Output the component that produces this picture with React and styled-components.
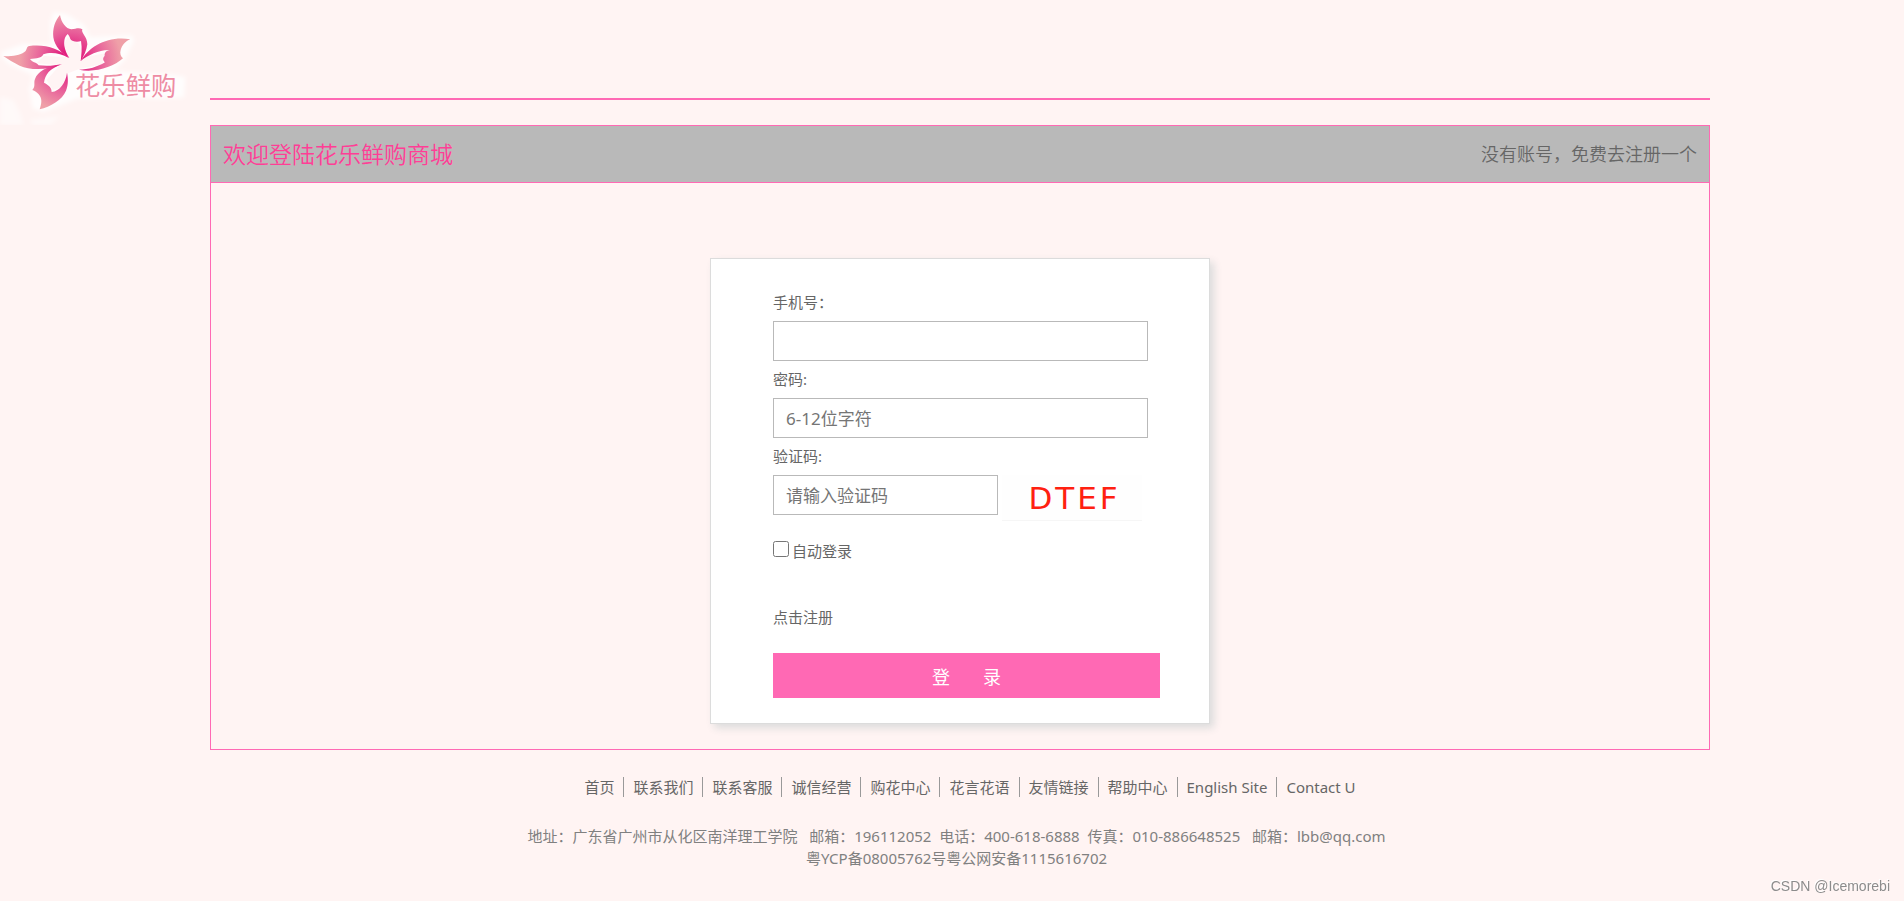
import { useState } from 'react';
import styled, { createGlobalStyle } from 'styled-components';

const GlobalStyle = createGlobalStyle`
	:root {
		--color-bg: #fff4f3;
		--color-pink: #ff69b4;
		--color-title: #ff3e96;
		--color-bar: #b9b9b9;
		--color-text-main: #666;
		--color-text-sec: #808080;
	}

	* {
		box-sizing: border-box;
		margin: 0;
		padding: 0;
	}

	body {
		background-color: var(--color-bg);
		color: var(--color-text-main);
		font-family: 'Noto Sans', 'Noto Sans CJK SC', sans-serif;
		font-size: 15px;
		line-height: 22px;
	}

	a {
		color: inherit;
		text-decoration: none;
	}

	input,
	button {
		font-family: inherit;
	}
`;

const Header = styled.header`
	display: flex;
	height: 125px;
`;

const LogoSide = styled.div`
	flex: 1 1 16px;
	min-width: 188px;
`;

const HeaderLine = styled.div`
	flex: 0 1 1500px;
	height: 100px;
	border-bottom: 2px solid var(--color-pink);
`;

const HeaderEnd = styled.div`
	flex: 1 1 0;
`;

const LogoSvg = styled.svg`
	display: block;
	width: 188px;
	height: 125px;
`;

const LogoText = styled.text`
	font-family: 'Liberation Serif', 'Noto Sans CJK SC', serif;
	font-size: 76px;
	fill: #ee8ca4;
`;

const Main = styled.main`
	padding-left: 16px;
`;

const Panel = styled.section`
	max-width: 1500px;
	margin: 0 auto;
	padding-bottom: 25px;
	border: 1px solid var(--color-pink);
`;

const PanelBar = styled.div`
	display: flex;
	align-items: center;
	justify-content: space-between;
	height: 57px;
	padding: 0 12px;
	border-bottom: 1px solid var(--color-pink);
	background-color: var(--color-bar);
`;

const Title = styled.h1`
	color: var(--color-title);
	font-size: 23px;
	font-weight: 350;
`;

const RegisterLink = styled.a`
	font-size: 18px;
	font-weight: 350;
`;

const Form = styled.form`
	display: flex;
	flex-direction: column;
	width: 500px;
	max-width: 100%;
	margin: 75px auto 0;
	padding: 25px 49px 25px 62px;
	border: 1px solid #dcdcdc;
	background-color: #fff;
	box-shadow: 4px 4px 8px #dcdcdc;
`;

const Field = styled.div`
	display: flex;
	flex-direction: column;
	margin-right: 12px;
`;

const Label = styled.label`
	padding: 7px 0 8px;
`;

const Input = styled.input`
	width: ${props => (props.$short ? '225px' : '100%')};
	height: 40px;
	padding: 0 12px;
	border: 1px solid var(--color-bar);
	font-size: 17px;
	color: var(--color-text-main);

	&::placeholder {
		color: #757575;
	}

	&:focus {
		outline: 1px solid var(--color-pink);
	}
`;

const CodeRow = styled.div`
	display: flex;
	align-items: flex-start;
	gap: 4px;
`;

const Code = styled.div`
	display: flex;
	justify-content: center;
	gap: 3px;
	width: 140px;
	height: 46px;
	padding-left: 2px;
	border-bottom: 1px solid #f6f6f6;
	background-color: #fefefe;
	font-family: 'DejaVu Sans', sans-serif;
	font-size: 31px;
	line-height: 47px;
	color: #ff2010;
`;

const Remember = styled.div`
	display: flex;
	align-items: center;
	gap: 3px;
	margin-top: 19px;
`;

const Checkbox = styled.input`
	width: 16px;
	height: 16px;
	margin-bottom: 5px;
`;

const SignUp = styled.a`
	align-self: flex-start;
	margin: 44px 0 25px;
`;

const Submit = styled.button`
	height: 45px;
	border: none;
	background-color: var(--color-pink);
	color: #fff;
	font-size: 18px;
	white-space: pre;
	cursor: pointer;

	&:hover {
		opacity: 0.9;
	}
`;

const Footer = styled.footer`
	padding: 27px 0 30px;
`;

const FooterNav = styled.nav`
	display: flex;
	justify-content: center;
	padding-left: 36px;
`;

const FooterLink = styled.a`
	padding: 0 9px;
	border-left: 1px solid #999;
	line-height: 20px;

	&:first-child {
		border-left: none;
	}
`;

const Address = styled.address`
	margin-top: 28px;
	padding-left: 9px;
	font-style: normal;
	text-align: center;
	color: var(--color-text-sec);
	white-space: pre-wrap;
`;

const Watermark = styled.span`
	position: fixed;
	right: 14px;
	bottom: 4px;
	font-family: 'Liberation Sans', Arial, sans-serif;
	font-size: 14px;
	color: #8c8c8c;
	text-shadow: -1px -1px 0 #fff;
`;

const footerLinks = [
	'首页',
	'联系我们',
	'联系客服',
	'诚信经营',
	'购花中心',
	'花言花语',
	'友情链接',
	'帮助中心',
	'English Site',
	'Contact U',
];

function Logo() {
	return (
		<LogoSvg viewBox="0 0 564 375" role="img" aria-label="花乐鲜购">
			<defs>
				<radialGradient
					id="petal"
					gradientUnits="userSpaceOnUse"
					cx="212"
					cy="185"
					r="180"
				>
					<stop offset="0.2" stopColor="#e2207f" />
					<stop offset="0.5" stopColor="#e8609a" />
					<stop offset="0.85" stopColor="#efa0a8" />
				</radialGradient>
				<filter id="soft" x="-10%" y="-10%" width="120%" height="120%">
					<feGaussianBlur stdDeviation="7" />
				</filter>
			</defs>

			{/* white glow under the flower and the name */}
			<g fill="#fff" filter="url(#soft)">
				<path
					opacity="0.85"
					d="M160 36L200 42L256 78L270 112L396 106L402 122L372 183L340 214L520 224L556 232L552 292L470 296L380 292L230 296L130 336L98 325L88 268L98 225L30 194L4 172L4 156L70 132L154 134L150 70Z"
				/>
				<path
					opacity="0.5"
					d="M0 290L40 300L60 340L70 375L0 375ZM90 360L180 348L150 375L100 375Z"
				/>
			</g>
			<path
				fill="#fff4f4"
				d="M203 112L238 132L248 172L318 160L308 192L240 206L198 222L190 262L158 270L140 240L180 196L110 190L132 168L204 172L192 134Z"
			/>

			<g fill="url(#petal)">
				<path d="M180 45C184 68 198 86 214 88C228 86 238 82 247 88C242 100 262 108 262 133C260 152 251 168 242 184C244 164 247 146 243 123C232 128 216 125 211 117C209 109 205 104 203 102C193 111 192 124 193 137C195 151 201 162 208 174C186 162 164 140 160 112C157 86 165 62 180 45Z" />
				<path d="M391 118C376 124 366 136 362 150C359 160 362 170 369 175C340 202 284 219 237 209C266 209 292 201 315 187C307 180 309 172 314 168C313 158 318 152 330 150C300 148 266 164 242 183C267 139 326 106 391 118Z" />
				<path d="M10 168C42 171 65 164 76 154C82 147 79 140 88 138C134 132 178 145 206 174C180 158 150 156 130 163C126 174 110 176 90 177C98 188 112 188 116 196C142 199 164 197 186 192C150 209 94 213 59 197C40 188 25 178 10 168Z" />
				<path d="M180 195C139 199 113 215 105 237C100 249 108 258 97 270C112 276 124 287 124 303C124 312 121 321 119 328C151 321 187 299 198 272C206 251 204 235 201 218C197 248 180 273 155 276C155 264 149 257 132 248C135 223 150 206 180 195Z" />
			</g>
			<LogoText x="225" y="286">
				花乐鲜购
			</LogoText>
		</LogoSvg>
	);
}

function App() {
	const [phone, setPhone] = useState('');
	const [password, setPassword] = useState('');
	const [code, setCode] = useState('');

	return (
		<>
			<GlobalStyle />
			<Header>
				<LogoSide>
					<Logo />
				</LogoSide>
				<HeaderLine />
				<HeaderEnd />
			</Header>

			<Main>
				<Panel>
					<PanelBar>
						<Title>欢迎登陆花乐鲜购商城</Title>
						<RegisterLink href="#register">
							没有账号，免费去注册一个
						</RegisterLink>
					</PanelBar>

					<Form onSubmit={e => e.preventDefault()}>
						<Field>
							<Label htmlFor="phone">手机号：</Label>
							<Input
								id="phone"
								type="text"
								value={phone}
								onChange={e => setPhone(e.target.value)}
							/>
						</Field>
						<Field>
							<Label htmlFor="password">密码:</Label>
							<Input
								id="password"
								type="password"
								placeholder="6-12位字符"
								value={password}
								onChange={e => setPassword(e.target.value)}
							/>
						</Field>
						<Field>
							<Label htmlFor="code">验证码:</Label>
							<CodeRow>
								<Input
									id="code"
									type="text"
									$short
									placeholder="请输入验证码"
									value={code}
									onChange={e => setCode(e.target.value)}
								/>
								<Code>
									{['D', 'T', 'E', 'F'].map(char => (
										<span key={char}>{char}</span>
									))}
								</Code>
							</CodeRow>
						</Field>

						<Remember>
							<Checkbox id="remember" type="checkbox" />
							<label htmlFor="remember">自动登录</label>
						</Remember>

						<SignUp href="#register">点击注册</SignUp>
						<Submit type="submit">
							登{'\u00a0\u00a0\u00a0\u00a0\u00a0\u00a0\u00a0'}录
						</Submit>
					</Form>
				</Panel>
			</Main>

			<Footer>
				<FooterNav>
					{footerLinks.map(link => (
						<FooterLink key={link} href="#">
							{link}
						</FooterLink>
					))}
				</FooterNav>
				<Address>
					{
						'地址：广东省广州市从化区南洋理工学院   邮箱：196112052  电话：400-618-6888  传真：010-886648525   邮箱：lbb@qq.com'
					}
					<br />
					粤YCP备08005762号粤公网安备1115616702
				</Address>
			</Footer>
			<Watermark>CSDN @Icemorebi</Watermark>
		</>
	);
}

export default App;
